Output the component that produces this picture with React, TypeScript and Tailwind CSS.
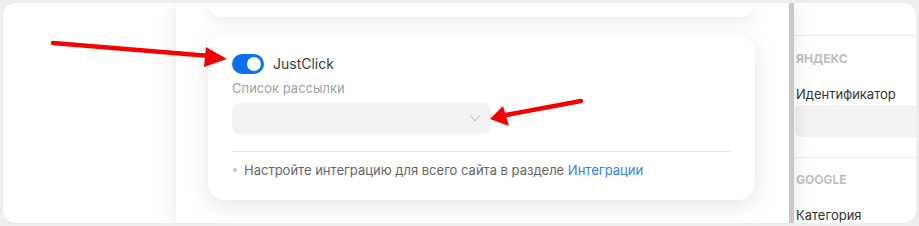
import React from "react";

export default function App() {
  return (
    <div className="relative w-[919px] h-[226px] bg-[#ededed] p-[3px] overflow-hidden" style={{ fontFamily: "Inter, 'Noto Sans', sans-serif" }}>
      <div className="flex h-full w-full rounded-[14px] bg-white overflow-hidden">
        {/* left column */}
        <div className="w-[173px] shrink-0 bg-white" />
        {/* main panel */}
        <div className="relative z-10 flex w-[618px] shrink-0 bg-white shadow-[0_0_18px_rgba(0,0,0,0.1)]">
          <div className="flex w-[613px] flex-col pl-[32px]">
            {/* top card (cut) */}
            <div className="h-[14px] w-[547px] rounded-b-[16px] bg-white shadow-[0_4px_14px_rgba(0,0,0,0.08)]" />
            {/* card 2 */}
            <div className="mt-[18px] flex h-[165px] w-[547px] flex-col rounded-[16px] bg-white px-[24px] pt-[19px] shadow-[0_6px_20px_rgba(0,0,0,0.1)]">
              <div className="flex h-[20px] items-center gap-[9px]">
                <div className="relative h-[20px] w-[32px] rounded-full bg-[#0b6ff0]">
                  <div className="absolute right-[3px] top-[3px] h-[14px] w-[14px] rounded-full bg-white" />
                </div>
                <span className="text-[14px] leading-none text-[#3a3a3a]">JustClick</span>
              </div>
              <div className="mt-[6px] text-[13px] leading-[16px] text-[#a0a0a0]">Список рассылки</div>
              <div className="mt-[7px] flex h-[31px] w-[259px] items-center justify-end rounded-[8px] bg-[#f2f2f2] pr-[11px]">
                <svg width="10" height="7" viewBox="0 0 10 7" fill="none">
                  <path d="M0.5 0.5L5 6L9.5 0.5" stroke="#b8b8b8" strokeWidth="1" />
                </svg>
              </div>
              <div className="mt-[17px] h-px w-full bg-[#e6e6e6]" />
              <div className="mt-[10px] flex items-center text-[13px] leading-[16px] text-[#666]">
                <span className="ml-[1px] mr-[7px] h-[4px] w-[4px] rounded-full bg-[#c4c4c4]" />
                <span>
                  Настройте интеграцию для всего сайта в разделе <span className="text-[#2f7fe6]">Интеграции</span>
                </span>
              </div>
            </div>
          </div>
          {/* scrollbar */}
          <div className="w-[5px] shrink-0 bg-[#c8c8c8]" />
        </div>
        {/* right panel */}
        <div className="flex min-w-0 flex-1 flex-col bg-white pl-[1px]">
          <div className="h-[33px] shrink-0 border-b border-[#eeeeee]" />
          <div className="mt-[15px] pl-[1px] text-[12px] font-bold leading-[16px] text-[#bdbdbd]">ЯНДЕКС</div>
          <div className="mt-[19px] pl-[1px] text-[13px] leading-[16px] text-[#333]">Идентификатор</div>
          <div className="mt-[3px] h-[32px] shrink-0 rounded-l-[6px] bg-[#f2f2f2]" />
          <div className="mt-[20px] h-px shrink-0 bg-[#eeeeee]" />
          <div className="mt-[14px] pl-[1px] text-[12px] font-bold leading-[16px] text-[#bdbdbd]">GOOGLE</div>
          <div className="mt-[19px] pl-[1px] text-[13px] leading-[16px] text-[#333]">Категория</div>
        </div>
      </div>
      {/* annotation arrows */}
      <svg className="pointer-events-none absolute left-0 top-0 z-20" width="919" height="226" viewBox="0 0 919 226">
        <line x1="53" y1="43" x2="210" y2="56" stroke="#f50000" strokeWidth="4.5" strokeLinecap="round" />
        <polygon points="206,47 227,59 204,67" fill="#f50000" />
        <line x1="581" y1="101" x2="506" y2="115" stroke="#f50000" strokeWidth="4.5" strokeLinecap="round" />
        <polygon points="503,106 490,119 509,126" fill="#f50000" />
      </svg>
    </div>
  );
}
